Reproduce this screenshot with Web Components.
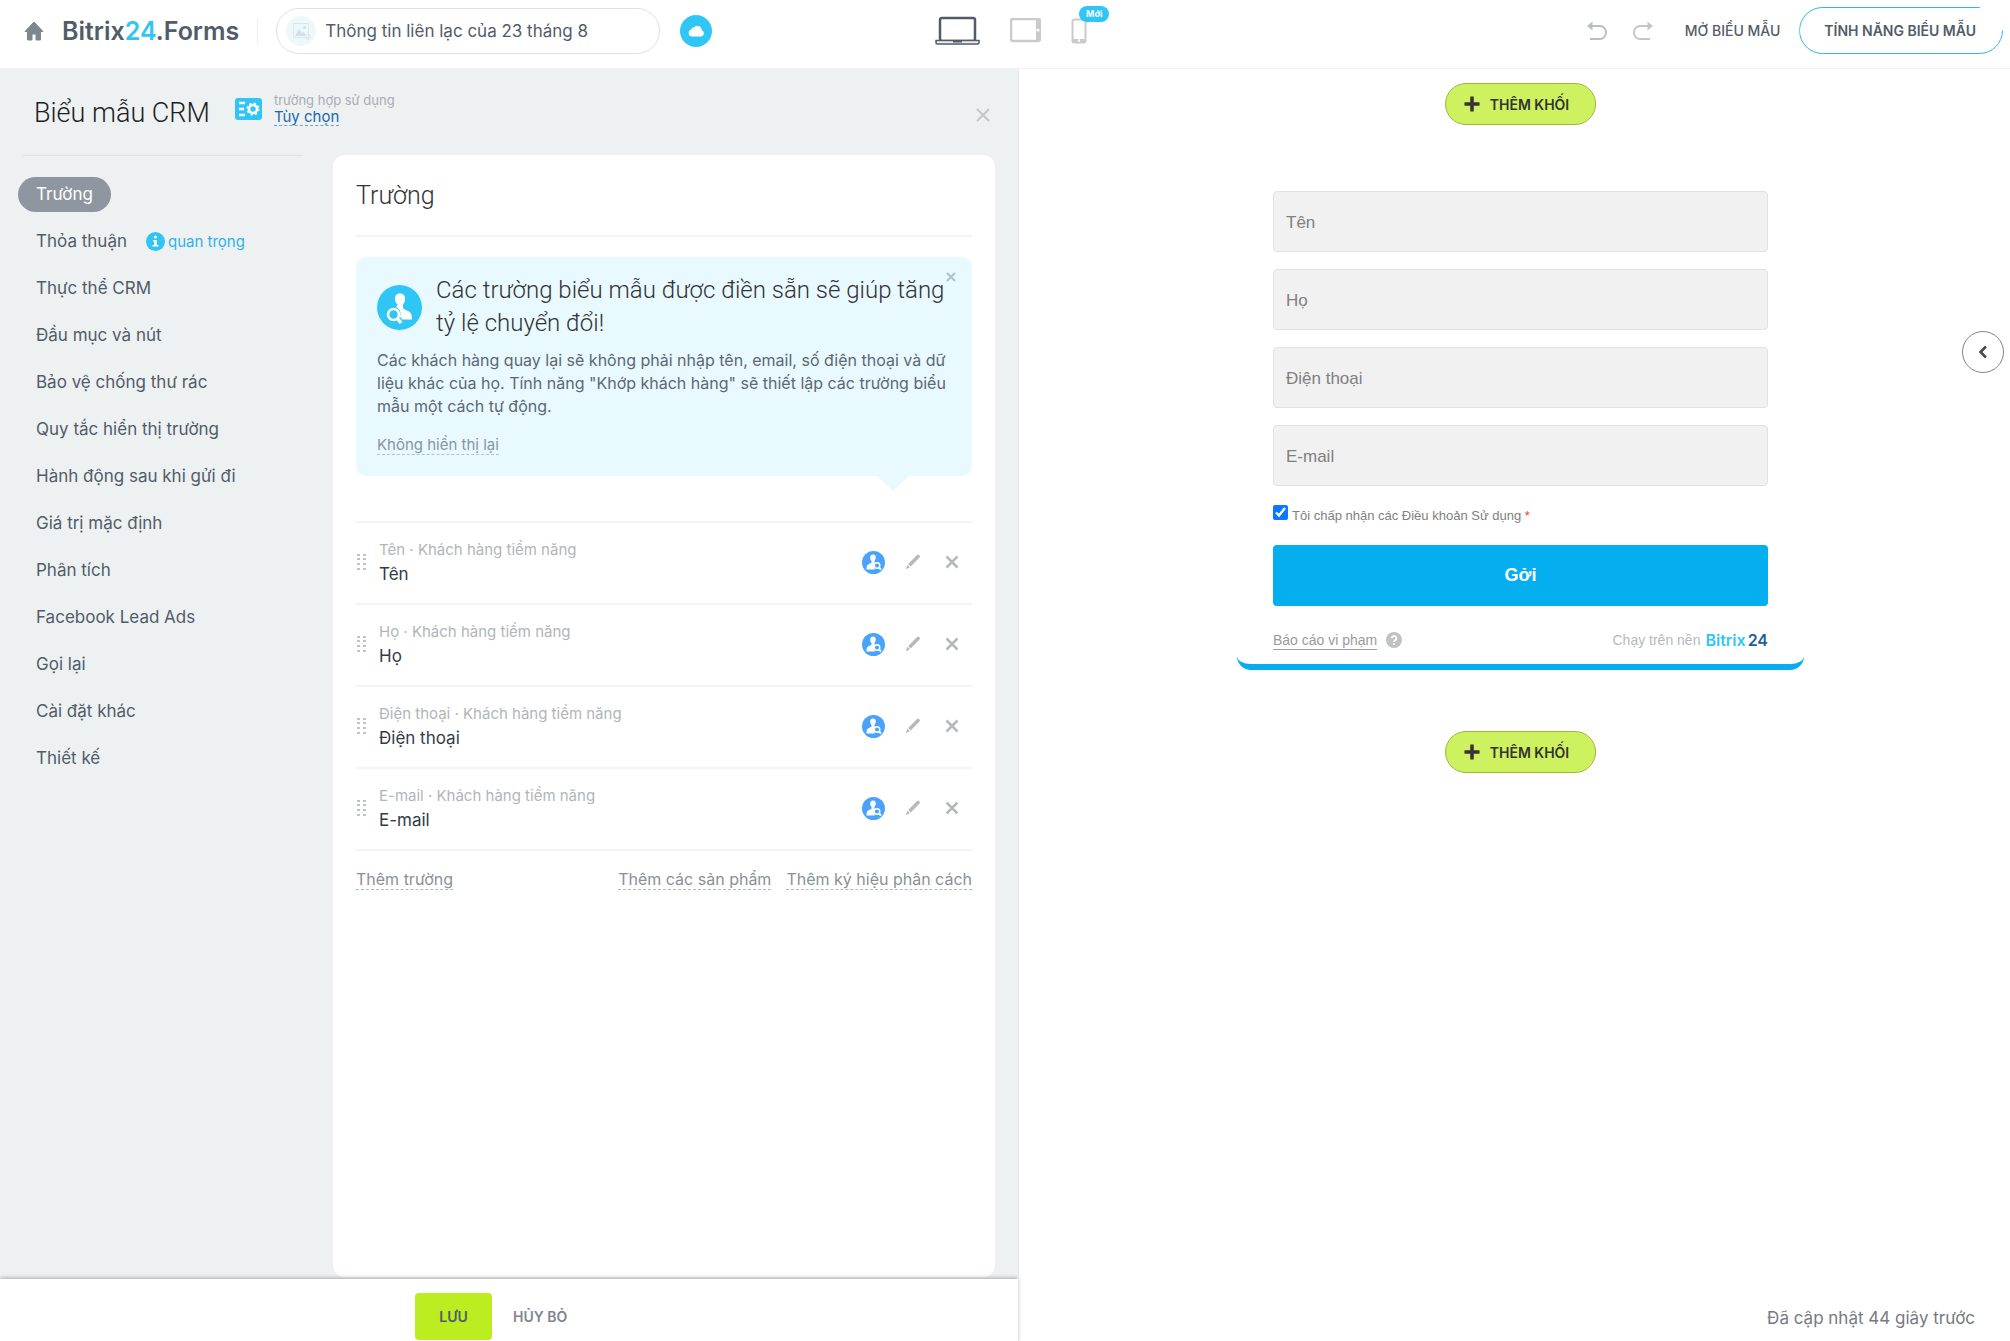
<!DOCTYPE html>
<html lang="vi">
<head>
<meta charset="utf-8">
<title>Bitrix24.Forms</title>
<style>
  html, body { height: 100%; margin: 0; }
  body {
    font-family: Inter, "Open Sans", sans-serif;
    font-size: 17px;
    color: #525c69;
    background: #fff;
  }
</style>
</head>
<body>
<forms-app></forms-app>

<script>
const base = `
  *, *::before, *::after { box-sizing: border-box; }
  button, input { font: inherit; color: inherit; margin: 0; }
  button { border: 0; padding: 0; background: none; cursor: pointer; }
  a { color: inherit; text-decoration: none; }
  h1, h2, h3, p, ul { margin: 0; padding: 0; font-weight: inherit; }
  h1, h2, h3 { font-family: Roboto, Inter, sans-serif; font-weight: 300; }
  ul { list-style: none; }
  svg { display: block; }
`;

function define(name, render) {
  customElements.define(name, class extends HTMLElement {
    constructor() {
      super();
      this.attachShadow({ mode: 'open' });
    }

    connectedCallback() {
      if (this.shadowRoot.childNodes.length) return;
      this.shadowRoot.innerHTML = render(this);
    }
  });
}

define('forms-app', () => `
  <style>
    ${base}
    :host { display: flex; flex-direction: column; height: 100vh; overflow: hidden; }
    main { flex: 1; min-height: 0; display: grid; grid-template-columns: calc(50% + 13px) minmax(0, 1fr); }
  </style>
  <top-bar></top-bar>
  <main>
    <settings-panel></settings-panel>
    <form-preview></form-preview>
  </main>
`);

define('top-bar', () => `
  <style>
    ${base}
    :host {
      display: grid;
      grid-template-columns: 1fr auto 1fr;
      align-items: start;
      height: 69px;
      padding: 7px 7px 0 24px;
      border-bottom: 1px solid #f0f1f2;
      background: #fff;
    }
    div { display: flex; align-items: center; height: 47px; }
    .logo { margin-left: 18px; padding-right: 18px; border-right: 1px solid #eceef0; font-size: 25px; line-height: 26px; font-weight: 600; color: #525c69; }
    .logo b { font-weight: 600; color: #2fc6f6; }
    .name {
      width: 384px;
      height: 46px;
      margin: 0 20px 0 18px;
      padding-left: 8px;
      gap: 8px;
      border: 1px solid #dfe0e3;
      border-radius: 23px;
    }
    .name input { flex: 1; min-width: 0; border: 0; padding: 0; background: none; outline: 0; font-size: 17px; }
    .devices { gap: 30px; margin-right: 5px; }
    .devices button { position: relative; }
    .badge {
      position: absolute;
      left: 8px;
      top: -12px;
      padding: 0 7px;
      border-radius: 8px;
      background: #2fc6f6;
      color: #fff;
      font-size: 9px;
      line-height: 16px;
      font-weight: 700;
    }
    .actions { justify-content: flex-end; }
    .history { margin-right: 26px; }
    .open { margin: 0 19px 0 6px; font-size: 14px; font-weight: 500; }
    .feature { position: relative; height: 47px; padding: 0 27px 0 25px; font-size: 14px; font-weight: 600; }
    /* the outline is drawn progressively, the last quarter is still open */
    .feature::before {
      content: "";
      position: absolute;
      inset: 0;
      border: 1px solid #2fb6e6;
      border-radius: 24px;
      clip-path: polygon(0 0, calc(100% - 23px) 0, calc(100% - 23px) 50%, 100% 50%, 100% 100%, 0 100%);
    }
  </style>
  <div>
    <a href="#" aria-label="Home"><svg width="20" height="20" viewBox="0 0 20 20" fill="#80868e"><path d="M10 1 19 10.500H16.500V19H12V13H8V19H3.500V10.500H1Z" stroke="#80868e" stroke-linejoin="round"/></svg></a>
    <a class="logo" href="#">Bitrix<b>24</b>.Forms</a>
    <div class="name">
      <svg width="32" height="32" viewBox="0 0 32 32"><circle cx="16" cy="16" r="15" fill="#edf8fb"/><g fill="none" stroke="#dde5ea"><rect x="8.500" y="8.500" width="15" height="14"/><circle cx="23" cy="22" r="2.500"/></g><circle cx="19.500" cy="12.500" r="1.500" fill="#d5dee4"/><path d="M10 21 14 14 17 18 19 17 21 21Z" fill="#d5dee4"/></svg>
      <input aria-label="Tên trang" value="Thông tin liên lạc của 23 tháng 8">
    </div>
    <svg width="32" height="32" viewBox="0 0 32 32"><circle cx="16" cy="16" r="16" fill="#2fc6f6"/><path d="M12 21.500a3.500 3.500 0 0 1-1-6.800 3 3 0 0 1 3-2.500 4.500 4.500 0 0 1 7.800 3.100 3.200 3.200 0 0 1-.8 6.200Z" fill="#fff"/></svg>
  </div>
  <div class="devices">
    <button aria-label="Desktop"><svg width="45" height="30" viewBox="0 0 45 30" fill="none" stroke="#525c69"><rect x="5" y="2" width="35" height="23" rx="2" stroke-width="2.500"/><path d="M1 24.500H44V26.500Q44 28 42 28H3Q1 28 1 26.500Z" fill="#edf0f2" stroke-width="1.500"/><path d="M18 25.500H27" stroke-width="2"/></svg></button>
    <button aria-label="Tablet"><svg width="31" height="26" viewBox="0 0 31 26"><rect x="1" y="1" width="29" height="22" rx="2" fill="none" stroke="#c8cacd" stroke-width="2.500"/><path d="M26 1h4v22h-4z" fill="#c8cacd"/><circle cx="28" cy="12" r="1.500" fill="#fff"/></svg></button>
    <button aria-label="Mobile"><svg width="16" height="26" viewBox="0 0 16 26"><rect x="1.500" y="1.500" width="13" height="23" rx="2" fill="none" stroke="#c8cacd" stroke-width="2"/><path d="M2 21h12v3H2z" fill="#c8cacd"/><circle cx="8" cy="22.500" r="1.200" fill="#fff"/></svg><span class="badge">Mới</span></button>
  </div>
  <div class="actions">
    <button class="history" aria-label="Undo"><svg width="20" height="20" viewBox="0 0 20 20"><path d="M3 5H13a5.500 6 0 0 1 0 13H3" fill="none" stroke="#b9bec4" stroke-width="2"/><path d="M0 5 5.500 0.500V9.500Z" fill="#b9bec4"/></svg></button>
    <button class="history" aria-label="Redo"><svg width="20" height="20" viewBox="0 0 20 20"><path d="M17 5H7a5.500 6 0 0 0 0 13H17" fill="none" stroke="#c3c7cc" stroke-width="2"/><path d="M20 5 14.500 0.500V9.500Z" fill="#c3c7cc"/></svg></button>
    <button class="open">MỞ BIỂU MẪU</button>
    <button class="feature">TÍNH NĂNG BIỂU MẪU</button>
  </div>
`);

define('settings-panel', () => `
  <style>
    ${base}
    :host { display: flex; flex-direction: column; min-height: 0; background: #edf1f2; }
    header { display: flex; align-items: center; height: 86px; padding: 2px 28px 0 34px; }
    h1 { font-size: 27px; line-height: 34px; color: #1c1f24; }
    header svg { flex: none; }
    header button { margin-top: 4px; }
    .case { display: flex; align-items: center; gap: 12px; margin: -9px auto 0 25px; font-size: 13px; line-height: 16px; color: #a8adb4; }
    .case a { display: inline-block; font-size: 15px; line-height: 17px; color: #2067b0; border-bottom: 1px dashed #6f9fd0; }
    .body { flex: 1; min-height: 0; display: flex; gap: 30px; padding: 0 23px 2px 23px; }
    side-menu { flex: 0 0 280px; }
    .card { flex: 1; min-width: 0; padding: 0 23px; border-radius: 12px; background: #fff; }
    h2 { height: 82px; padding-top: 24px; border-bottom: 2px solid #f3f4f5; font-size: 25px; line-height: 34px; color: #333; }
    hint-banner { margin-top: 20px; }
    .rows { margin-top: 45px; border-top: 2px solid #f3f4f5; }
    .links { display: flex; gap: 15px; margin-top: 18px; font-size: 16px; line-height: 20px; color: #8b9097; }
    .links a { border-bottom: 1px dashed #b4b8be; }
    .links a:first-child { margin-right: auto; }
    footer {
      position: relative;
      display: flex;
      align-items: flex-start;
      gap: 21px;
      height: 62px;
      padding: 14px 0 0 415px;
      background: #fff;
      box-shadow: 0 -1px 4px rgba(0, 0, 0, .3);
      font-size: 14px;
      font-weight: 600;
    }
    footer button { height: 47px; color: #80868e; }
    footer .save { width: 77px; border-radius: 4px; background: #bbed21; color: #535c69; }
  </style>
  <header>
    <h1>Biểu mẫu CRM</h1>
    <div class="case">
      <svg width="27" height="22" viewBox="0 0 27 22"><rect width="27" height="22" rx="3" fill="#2fc6f6"/><g stroke="#fff" stroke-width="2.500"><path d="M4 5H10M4 11H9M4 17H10"/></g><circle cx="18" cy="11" r="4" fill="none" stroke="#fff" stroke-width="2.500"/><circle cx="18" cy="11" r="5.500" fill="none" stroke="#fff" stroke-width="2" stroke-dasharray="2.160"/></svg>
      <div>trường hợp sử dụng<br><a href="#">Tùy chọn</a></div>
    </div>
    <button aria-label="Đóng"><svg width="14" height="14" viewBox="0 0 14 14" stroke="#c3c7ca" stroke-width="2"><path d="M1 1 13 13M13 1 1 13"/></svg></button>
  </header>
  <div class="body">
    <side-menu></side-menu>
    <section class="card">
      <h2>Trường</h2>
      <hint-banner></hint-banner>
      <div class="rows">
        <field-row name="Tên"></field-row>
        <field-row name="Họ"></field-row>
        <field-row name="Điện thoại"></field-row>
        <field-row name="E-mail"></field-row>
      </div>
      <div class="links">
        <a href="#">Thêm trường</a>
        <a href="#">Thêm các sản phẩm</a>
        <a href="#">Thêm ký hiệu phân cách</a>
      </div>
    </section>
  </div>
  <footer>
    <button class="save">LƯU</button>
    <button>HỦY BỎ</button>
  </footer>
`);

define('side-menu', () => `
  <style>
    ${base}
    :host { display: block; border-top: 1px solid #dde1e3; }
    ul { display: flex; flex-direction: column; gap: 12px; margin-left: -5px; padding-top: 21px; }
    li { display: flex; align-items: center; }
    li > a { padding: 0 18px; border-radius: 18px; font-size: 17px; line-height: 35px; }
    .active { background: #8f969f; color: #fff; }
    .important { display: flex; align-items: center; gap: 3px; margin-left: 1px; font-size: 15px; line-height: 20px; color: #2fb3e8; }
  </style>
  <ul>
    <li><a href="#" class="active">Trường</a></li>
    <li><a href="#">Thỏa thuận</a><span class="important"><svg width="19" height="19" viewBox="0 0 19 19"><circle cx="9.500" cy="9.500" r="9.500" fill="#2fc6f6"/><circle cx="9.500" cy="5" r="1.600" fill="#fff"/><path d="M7 8h3.800v5H12.500v1.500h-6V13H8V9.500H7Z" fill="#fff"/></svg>quan trọng</span></li>
    <li><a href="#">Thực thể CRM</a></li>
    <li><a href="#">Đầu mục và nút</a></li>
    <li><a href="#">Bảo vệ chống thư rác</a></li>
    <li><a href="#">Quy tắc hiển thị trường</a></li>
    <li><a href="#">Hành động sau khi gửi đi</a></li>
    <li><a href="#">Giá trị mặc định</a></li>
    <li><a href="#">Phân tích</a></li>
    <li><a href="#">Facebook Lead Ads</a></li>
    <li><a href="#">Gọi lại</a></li>
    <li><a href="#">Cài đặt khác</a></li>
    <li><a href="#">Thiết kế</a></li>
  </ul>
`);

define('hint-banner', () => `
  <style>
    ${base}
    :host { display: block; position: relative; padding: 17px 20px 21px 21px; border-radius: 10px; background: #e8f9ff; }
    :host::after {
      content: "";
      position: absolute;
      top: 100%;
      right: 63px;
      border: 16px solid transparent;
      border-top: 15px solid #e8f9ff;
      border-bottom: 0;
    }
    .head { display: flex; align-items: center; gap: 14px; }
    .head svg { flex: none; }
    h3 { font-size: 24px; line-height: 33px; color: #333; }
    p { margin-top: 9px; font-size: 16px; line-height: 23px; color: #5c6873; }
    .hide { display: inline-block; margin-top: 18px; font-size: 15px; line-height: 18px; color: #89959f; border-bottom: 1px dashed #b4c0c6; }
    .close { position: absolute; top: 15px; right: 16px; }
  </style>
  <div class="head">
    <svg width="45" height="45" viewBox="0 0 45 45"><circle cx="22.500" cy="22.500" r="22.500" fill="#2fc6f6"/><path d="M23 8.500c3.600 0 5.300 2.500 5 6-.2 2.500-1.300 4-2 5.500v3c1 2 7 3 8 5.500.7 1.700 1 4 1 6H25l-2-3c1.500-4-.5-8-4-9.500 1-1 1.500-1.500 1.500-2.500-1.500-1.500-2.500-3.500-2.500-5.500 0-3.500 1.500-5.500 5-5.500Z" fill="#fff"/><g fill="none" stroke="#fff" stroke-width="2.500"><circle cx="16.500" cy="29.500" r="5.500"/><path d="M20.500 33.500 24 38" stroke-width="3.500"/></g></svg>
    <h3>Các trường biểu mẫu được điền sẵn sẽ giúp tăng tỷ lệ chuyển đổi!</h3>
  </div>
  <p>Các khách hàng quay lại sẽ không phải nhập tên, email, số điện thoại và dữ liệu khác của họ. Tính năng "Khớp khách hàng" sẽ thiết lập các trường biểu mẫu một cách tự động.</p>
  <a class="hide" href="#">Không hiển thị lại</a>
  <button class="close" aria-label="Đóng"><svg width="10" height="10" viewBox="0 0 10 10" stroke="#b3c0c7" stroke-width="2"><path d="M1 1 9 9M9 1 1 9"/></svg></button>
`);

define('field-row', el => `
  <style>
    ${base}
    :host { display: flex; align-items: center; height: 82px; padding: 0 13px 2px 1px; border-bottom: 2px solid #f3f4f5; box-sizing: border-box; }
    .text { margin: 0 auto 0 13px; padding-bottom: 2px; line-height: 24px; color: #333b47; }
    small { display: block; font-size: 15px; line-height: 25px; color: #b1b5ba; }
    .person { margin-right: 20px; }
    .edit { margin-right: 24px; }
  </style>
  <svg width="9" height="18" viewBox="0 0 9 18" fill="#bfc2c6"><path d="M0 1h3v2H0zM6 1h3v2H6zM0 5h3v2H0zM6 5h3v2H6zM0 10h3v2H0zM6 10h3v2H6zM0 15h3v2H0zM6 15h3v2H6z"/></svg>
  <div class="text"><small>${el.getAttribute('name')} · Khách hàng tiềm năng</small>${el.getAttribute('name')}</div>
  <button class="person" aria-label="Khớp khách hàng"><svg width="23" height="23" viewBox="0 0 23 23"><circle cx="11.500" cy="11.500" r="11.500" fill="#4aa3fb"/><path d="M11 3.500c2 0 3 1.300 2.800 3.300-.1 1.500-.8 2.300-1.300 3v1.700l1 .7c-2 1.800-2 4.600-.5 6.300H4.500c0-3 .5-4.500 2-5.200l3-1.500V10C8.600 9.300 8.200 8 8.200 6.800c0-2 .8-3.300 2.800-3.300Z" fill="#fff"/><circle cx="15" cy="14.500" r="2.800" fill="#4aa3fb" stroke="#fff" stroke-width="1.400"/><path d="M17 16.500 19 18.500" stroke="#fff" stroke-width="1.800"/></svg></button>
  <button class="edit" aria-label="Sửa"><svg width="16" height="16" viewBox="0 0 16 16" fill="#b5b9be"><path d="M12 1q1-1 2 0l.5.5q1 1 0 2L5.700 12.400 3.200 9.900ZM2.400 10.700l2.500 2.500L0.800 15.200Z"/></svg></button>
  <button aria-label="Xóa"><svg width="14" height="14" viewBox="0 0 14 14" stroke="#b5b9be" stroke-width="2.500"><path d="M1.500 1.500 12.500 12.500M12.500 1.500 1.500 12.500"/></svg></button>
`);

define('form-preview', () => `
  <style>
    ${base}
    :host { position: relative; display: flex; flex-direction: column; align-items: center; padding: 14px 0 0 12px; border-left: 1px solid #e6e8ea; }
    crm-form { width: 567px; max-width: 100%; margin: 51px 0 61px; }
    .next {
      position: absolute;
      right: 6px;
      top: 262px;
      display: grid;
      place-items: center;
      width: 42px;
      height: 42px;
      border: 1px solid #80868e;
      border-radius: 50%;
      background: #fff;
    }
    .status { margin: auto 35px 12px auto; line-height: 22px; color: #757b82; }
  </style>
  <add-block></add-block>
  <crm-form></crm-form>
  <add-block></add-block>
  <p class="status">Đã cập nhật 44 giây trước</p>
  <button class="next" aria-label="Mở bảng"><svg width="10" height="14" viewBox="0 0 10 14" fill="none" stroke="#444a52" stroke-width="2.500"><path d="M8 1.500 2.500 7 8 12.500"/></svg></button>
`);

define('add-block', () => `
  <style>
    ${base}
    :host { display: block; }
    button {
      display: flex;
      align-items: center;
      gap: 10px;
      height: 42px;
      padding: 0 26px 0 18px;
      border: 1px solid #9dbb35;
      border-radius: 21px;
      background: #cef25f;
      font-size: 14px;
      font-weight: 600;
      color: #333;
    }
  </style>
  <button><svg width="16" height="16" viewBox="0 0 16 16" stroke="#333" stroke-width="3.500"><path d="M8 0.500V15.500M0.500 8H15.500"/></svg>THÊM KHỐI</button>
`);

define('crm-form', () => `
  <style>
    ${base}
    :host { display: block; font-family: "Liberation Sans", Arial, sans-serif; }
    form {
      display: flex;
      flex-direction: column;
      gap: 17px;
      padding: 15px 36px 7px;
      border-bottom: 6px solid #04aeef;
      border-radius: 14px;
    }
    .agree { display: flex; align-items: center; gap: 4px; height: 25px; font-size: 13px; color: #808080; }
    .agree input { width: 15px; height: 15px; margin-bottom: 6px; accent-color: #0a78ff; }
    .agree b { font-weight: 400; color: #f33; }
    .send { height: 61px; border-radius: 4px; background: #04aeef; color: #fff; font-size: 18px; font-weight: 700; }
    .foot { display: flex; align-items: center; height: 34px; font-size: 14px; color: #b5b9be; }
    .report { margin-right: 9px; line-height: 18px; border-bottom: 1px solid #a0a0a0; color: #9a9a9a; }
    .by { display: flex; align-items: center; gap: 5px; margin-left: auto; }
    .by a { font: 600 16px Inter, sans-serif; color: #2fc6f6; }
    .by b { margin-left: 2px; font-weight: 600; color: #215f98; }
  </style>
  <form>
    <form-field label="Tên"></form-field>
    <form-field label="Họ"></form-field>
    <form-field label="Điện thoại"></form-field>
    <form-field label="E-mail"></form-field>
    <label class="agree"><input type="checkbox" checked><span>Tôi chấp nhận các Điều khoản Sử dụng <b>*</b></span></label>
    <button class="send" type="button">Gởi</button>
    <div class="foot">
      <a class="report" href="#">Báo cáo vi phạm</a>
      <svg width="16" height="16" viewBox="0 0 16 16"><circle cx="8" cy="8" r="8" fill="#c0c2c4"/><path d="M5.700 6.300a2.300 2.300 0 1 1 3.400 2Q8 9 8 9.800" fill="none" stroke="#fff" stroke-width="1.800"/><circle cx="8" cy="12" r="1.100" fill="#fff"/></svg>
      <span class="by">Chạy trên nền <a href="#">Bitrix<b>24</b></a></span>
    </div>
  </form>
`);

define('form-field', el => `
  <style>
    ${base}
    :host { display: block; position: relative; }
    input { display: block; width: 100%; height: 61px; padding: 0 13px; border: 1px solid #e2e2e2; border-radius: 4px; background: #f1f1f1; outline: 0; }
    label { position: absolute; left: 13px; top: 21px; line-height: 21px; font-size: 17px; color: #808080; }
  </style>
  <input id="field" type="text">
  <label for="field">${el.getAttribute('label')}</label>
`);
</script>
</body>
</html>
